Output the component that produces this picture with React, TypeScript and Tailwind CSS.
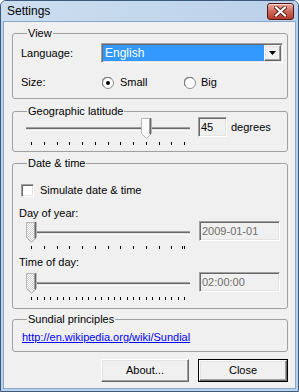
import React from "react";

const sunken =
  "border border-t-[#a0a0a0] border-l-[#a0a0a0] border-b-white border-r-white shadow-[inset_1px_1px_0_#696969,inset_-1px_-1px_0_#e3e3e3]";

const raised =
  "border border-t-white border-l-white border-b-[#696969] border-r-[#696969] shadow-[inset_-1px_-1px_0_#a0a0a0,inset_1px_1px_0_#e3e3e3]";

type GroupProps = {
  title: string;
  className?: string;
  children: React.ReactNode;
};

const Group = ({ title, className = "", children }: GroupProps) => (
  <fieldset
    className={`rounded-[3px] border border-[#a0a0a0] pl-[8px] pr-[4px] ${className}`}
  >
    <legend className="ml-[6px] px-[1px] leading-[13px]">{title}</legend>
    {children}
  </fieldset>
);

const CloseButton = () => (
  <div className="flex h-[17px] w-[27px] items-center justify-center rounded-[3px] border border-[#4f1a14] bg-gradient-to-b from-[#e8a99f] via-[#d0685c] to-[#b8372a] shadow-[inset_0_1px_0_#f4cfc8]">
    <svg width="13" height="11" viewBox="0 0 13 11">
      <path
        d="M2 1.5L11 9.5M11 1.5L2 9.5"
        stroke="#5a1c14"
        strokeWidth="4"
        strokeLinecap="square"
      />
      <path
        d="M2 1.5L11 9.5M11 1.5L2 9.5"
        stroke="#ffffff"
        strokeWidth="2.2"
        strokeLinecap="square"
      />
    </svg>
  </div>
);

const Radio = ({ checked }: { checked?: boolean }) => (
  <svg width="12" height="12" viewBox="0 0 12 12">
    <circle cx="6" cy="6" r="5.5" fill="#ffffff" stroke="#8c8c8c" />
    <path d="M1.6 9.2A5 5 0 0 1 9.2 1.6" fill="none" stroke="#6a6a6a" />
    {checked && <circle cx="6" cy="6" r="2" fill="#000000" />}
  </svg>
);

const Thumb = ({ disabled }: { disabled?: boolean }) => (
  <svg width="11" height="21" viewBox="0 0 11 21">
    <defs>
      <pattern id="dither" width="2" height="2" patternUnits="userSpaceOnUse">
        <rect width="2" height="2" fill="#ffffff" />
        <rect width="1" height="1" fill="#cfcfcf" />
        <rect x="1" y="1" width="1" height="1" fill="#cfcfcf" />
      </pattern>
    </defs>
    <path
      d="M0.5 0.5H10.5V15.5L5.5 20.5L0.5 15.5Z"
      fill={disabled ? "url(#dither)" : "#fcfcfc"}
      stroke="#b4b4b4"
    />
    <path d="M8.5 1V16" stroke="#a0a0a0" />
    <path d="M9.5 0V16.5" stroke="#696969" />
  </svg>
);

type SliderProps = {
  ticks: number;
  pos: number;
  disabled?: boolean;
  doubleEnd?: boolean;
};

const Slider = ({ ticks, pos, disabled, doubleEnd }: SliderProps) => {
  const tickX = (i: number) => 7 + Math.round((i * 153) / (ticks - 1));
  const xs = Array.from({ length: ticks }, (_, i) => tickX(i));
  if (doubleEnd) xs.push(153 + 7 - 2);
  return (
    <div className="relative h-[29px] w-[168px]">
      <div className="absolute left-[2px] top-[10px] h-[4px] w-[164px] border-y border-t-[#a0a0a0] border-b-white bg-[#e3e3e3] shadow-[inset_0_1px_0_#696969]" />
      <div className="absolute top-[1px]" style={{ left: tickX(pos) - 5 }}>
        <Thumb disabled={disabled} />
      </div>
      <svg className="absolute left-0 top-[25px]" width="168" height="3">
        {xs.map((x, i) => (
          <line key={i} x1={x + 0.5} x2={x + 0.5} y1="0" y2="3" stroke="#000" />
        ))}
      </svg>
    </div>
  );
};

const TextBox = ({
  value,
  className = "",
  disabled,
}: {
  value: string;
  className?: string;
  disabled?: boolean;
}) => (
  <div
    className={`flex h-[20px] items-center bg-[#f0f0f0] pl-[2px] ${sunken} ${
      disabled ? "text-[#6d6d6d]" : "text-black"
    } ${className}`}
  >
    {value}
  </div>
);

const Combo = () => (
  <div className={`flex h-[20px] w-[182px] bg-white p-[1px] ${sunken}`}>
    <div className="flex flex-1 items-center bg-[#3399ff] pl-[2px] text-[12px] text-white">
      English
    </div>
    <div className={`flex w-[17px] items-center justify-center bg-[#f0f0f0] ${raised}`}>
      <svg width="7" height="4" viewBox="0 0 7 4">
        <path d="M0 0H7L3.5 4Z" fill="#000" />
      </svg>
    </div>
  </div>
);

const Button = ({ label, primary }: { label: string; primary?: boolean }) => (
  <div
    className={`h-[23px] ${primary ? "w-[90px] border border-black" : "w-[88px]"}`}
  >
    <div
      className={`flex h-full w-full items-center justify-center bg-[#f0f0f0] ${raised}`}
    >
      {label}
    </div>
  </div>
);

export default function App() {
  return (
    <div className="flex h-[392px] w-[299px] flex-col overflow-hidden rounded-t-[6px] border border-[#3d5a7c] bg-[#b9d1ea] font-['Liberation_Sans',Arial,sans-serif] text-[11px] text-black">
      <div className="flex h-[20px] items-start justify-between bg-gradient-to-r from-[#cddef0] to-[#b9d1ea] pl-[6px] pr-[4px] pt-[2px]">
        <span className="text-[12px] leading-[17px]">Settings</span>
        <CloseButton />
      </div>

      <div className="mx-[2px] mb-[2px] flex flex-1 flex-col border border-[#8aa7c8] bg-[#f0f0f0] pl-[8px] pr-[7px] pt-[5px]">
        <Group title="View" className="pb-[9px]">
          <div className="mt-[3px] flex h-[20px] items-center">
            <span className="w-[80px]">Language:</span>
            <Combo />
          </div>
          <div className="mt-[13px] flex h-[13px] items-center">
            <span className="w-[81px]">Size:</span>
            <div className="flex w-[82px] items-center">
              <Radio checked />
              <span className="ml-[6px]">Small</span>
            </div>
            <div className="flex items-center">
              <Radio />
              <span className="ml-[5px]">Big</span>
            </div>
          </div>
        </Group>

        <Group title="Geographic latitude" className="mt-[6px] pb-[5px]">
          <div className="-mt-[1px] flex items-start">
            <div className="ml-[3px]">
              <Slider ticks={13} pos={9} />
            </div>
            <div className="ml-[6px] flex h-[20px] items-center">
              <TextBox value="45" className="w-[29px]" />
              <span className="ml-[4px]">degrees</span>
            </div>
          </div>
        </Group>

        <Group title="Date & time" className="mt-[5px] pb-[7px]">
          <div className="mt-[14px] flex h-[13px] items-center">
            <div className={`h-[13px] w-[13px] bg-white ${sunken}`} />
            <span className="ml-[6px]">Simulate date &amp; time</span>
          </div>
          <div className="-ml-[2px] mt-[10px] h-[13px] leading-[13px]">Day of year:</div>
          <div className="mt-[1px] flex items-start">
            <div className="ml-[3px]">
              <Slider ticks={13} pos={0} disabled doubleEnd />
            </div>
            <TextBox value="2009-01-01" className="ml-[7px] w-[81px]" disabled />
          </div>
          <div className="-ml-[2px] mt-[6px] h-[13px] leading-[13px]">Time of day:</div>
          <div className="mt-[3px] flex items-start">
            <div className="ml-[3px]">
              <Slider ticks={25} pos={0} disabled />
            </div>
            <TextBox value="02:00:00" className="ml-[7px] w-[81px]" disabled />
          </div>
        </Group>

        <Group title="Sundial principles" className="mt-[4px] pb-[7px]">
          <div className="mt-[5px] h-[13px] leading-[13px]">
            <a className="ml-[1px] text-[#0000ff] underline">
              http://en.wikipedia.org/wiki/Sundial
            </a>
          </div>
        </Group>

        <div className="mt-[7px] flex justify-end gap-[9px]">
          <Button label="About..." />
          <Button label="Close" primary />
        </div>
      </div>
    </div>
  );
}
